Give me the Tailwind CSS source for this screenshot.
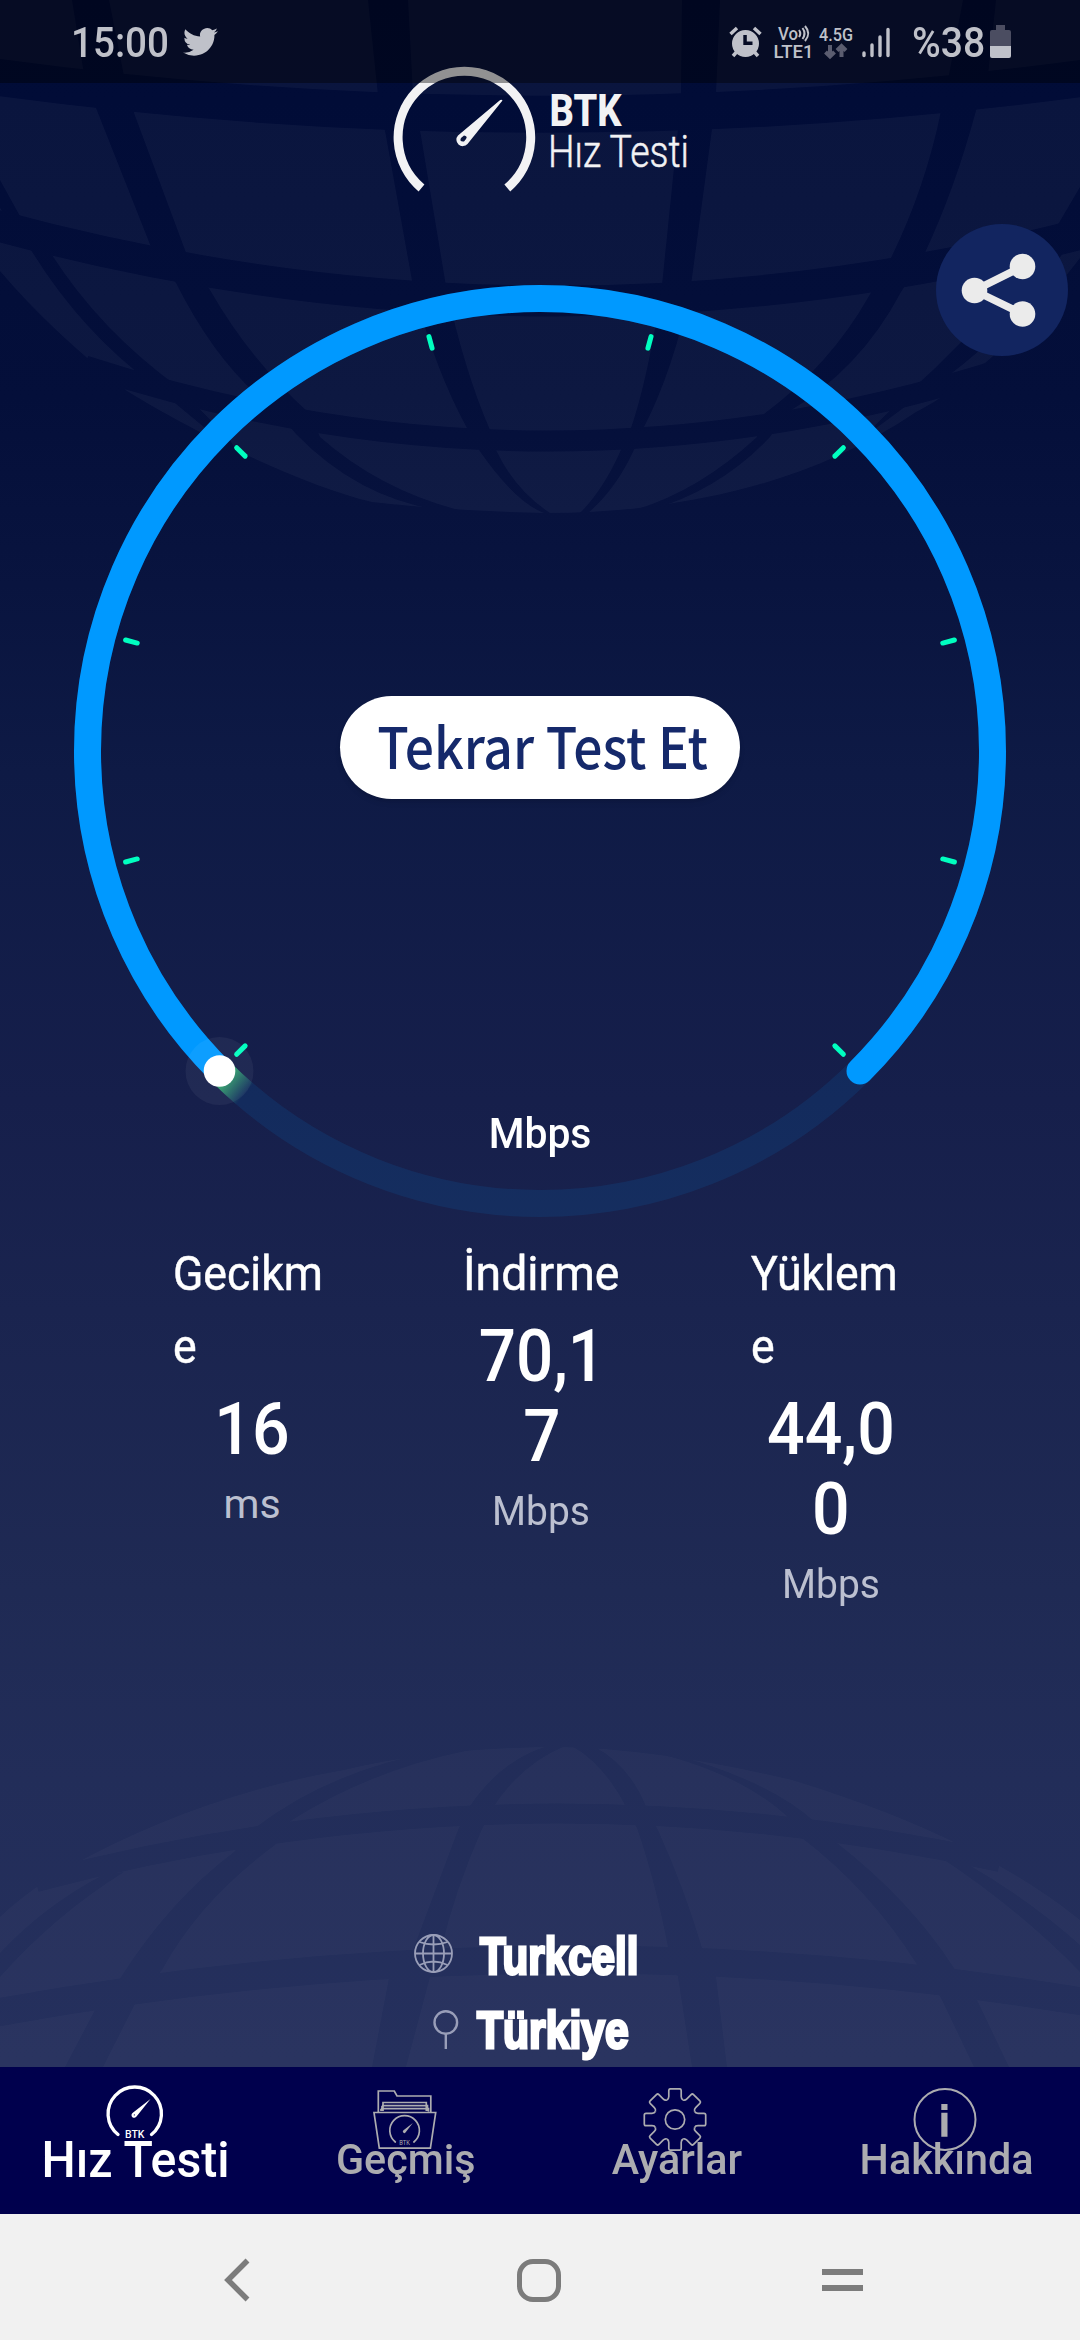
<!DOCTYPE html>
<html lang="tr">
<head>
  <meta charset="utf-8">
  <meta name="viewport" content="width=device-width, initial-scale=1">
  <title>BTK Hız Testi</title>
  <script src="https://cdn.jsdelivr.net/npm/@tailwindcss/browser@4"></script>
</head>
<body class="bg-[#000a35]">
<div class="relative flex h-[2340px] w-[1080px] flex-col overflow-hidden bg-[linear-gradient(180deg,#000b36_0%,#040f3a_17%,#09143f_25%,#0e1a45_33%,#161f4b_47%,#1a244f_56%,#1f2a54_68%,#222d59_76%,#25305d_88%)] font-['Roboto',sans-serif] text-white">

  <!-- globe backdrop -->
  <svg class="absolute inset-0" width="1080" height="2340" viewBox="0 0 1080 2340">
    <mask id="globes" maskUnits="userSpaceOnUse" x="0" y="0" width="1080" height="2340">
      <path fill="#fff" d="M0 0H1080V258C1040 310 1010 340 992 357C960 385 940 400 916 412C830 470 740 495 647 507Q600 513 545 513Q450 511 372 502C300 485 190 430 127 391Q50 330 0 271Z"/>
      <g fill="none" stroke="#000">
        <path stroke-width="37" d="M-5 77Q540 151 1085 78"/>
        <path stroke-width="31" d="M-5 225Q540 373 1085 233"/>
        <path stroke-width="21" d="M85 366Q545 515 1005 368"/>
      </g>
      <path d="M368 0L378 95L386 136L413 286Q435 370 468 430L479 450Q515 502 544 513H550Q515 490 496 450L490 430Q464 370 446 286L421 136L413 95L408 0Z"/>
      <path d="M682 0L681 93L678 129L662 285Q648 380 630 431L620 452Q603 490 580 513H588Q615 490 633 452L642 431Q674 370 691 285L712 129L716 93L720 0Z"/>
      <path d="M72 0L83 68L96 108L153 252L176 283Q220 370 275 409L296 434Q360 500 445 511H462Q380 490 320 437L310 414Q250 360 210 290L188 258L134 113L124 76L109 0Z"/>
      <path d="M963 0L948 80L941 111Q925 190 888 264L869 296Q830 365 764 414L757 437Q700 490 635 510H650Q720 490 770 437L785 414Q860 370 901 292L922 259Q955 190 977 107L988 75L996 0Z"/>
      <path d="M0 180L26 227L52 255Q100 330 178 387L230 440L240 457L152 384Q80 330 31 250L0 208Z"/>
      <path d="M1080 187L1053 233Q990 320 906 395L860 440L925 392Q1020 330 1080 225Z"/>

      <path fill="#fff" d="M0 1917C20 1898 45 1880 69 1867Q200 1795 344 1770Q441 1747 560 1747Q661 1749 792 1780Q890 1810 964 1847Q1030 1880 1080 1920V2070H0Z"/>
      <g fill="none" stroke="#000">
        <path stroke-width="20" d="M36 1882Q515 1756 1000 1862"/>
        <path stroke-width="28" d="M-5 2013Q545 1912 1085 2002"/>
      </g>
      <path d="M372 2067L389 1978L413 1950L458 1830L468 1809Q500 1760 548 1746H565Q520 1765 492 1809L482 1829Q455 1890 441 1950L430 1977L406 2067Z"/>
      <path d="M692 2067L678 1977L668 1947Q655 1880 637 1828L627 1809Q605 1765 572 1746H593Q630 1765 647 1809L658 1830Q685 1890 702 1948L716 1977L727 2067Z"/>
      <path d="M65 2067L96 2008L121 1977Q170 1900 234 1852L255 1828Q330 1770 441 1750L470 1750Q370 1770 289 1822L275 1845Q200 1900 162 1970L138 1998L103 2067Z"/>
      <path d="M974 2067L940 1996L916 1963Q870 1890 802 1838L792 1821Q740 1770 635 1748L665 1752Q770 1780 816 1823L837 1843Q910 1900 954 1968L978 2002L1009 2067Z"/>
      <path d="M0 1953Q45 1905 103 1875L124 1872Q55 1915 0 1977Z"/>
      <path d="M940 1857L964 1862Q1030 1900 1080 1945V1972Q1020 1910 940 1857Z"/>
    </mask>
    <rect width="1080" height="1000" fill="#fff" fill-opacity=".038" mask="url(#globes)"/>
    <rect y="1000" width="1080" height="1070" fill="#fff" fill-opacity=".025" mask="url(#globes)"/>
  </svg>

  <!-- logo -->
  <header class="relative h-[275px] pt-[60px] pl-[390px]">
    <svg class="overflow-visible" width="310" height="140" viewBox="0 0 310 140" fill="#f2f2f4">
      <path d="M31.500 128A66.300 66.300 0 1 1 117.300 128" fill="none" stroke="#f2f2f4" stroke-width="9"/>
      <path fill-rule="evenodd" d="M112.500 40.500Q111.500 39 109 41L68 75.500A6.300 6.300 0 1 0 77.500 84ZM71 78L74 75.500Q78 76 76 79L74 81.500Q69 82 71 78Z"/>
      <text x="159.500" y="65.800" font-size="45" font-weight="800" textLength="72" lengthAdjust="spacingAndGlyphs">BTK</text>
      <text x="158" y="106.700" font-size="45" font-weight="300" stroke="#f2f2f4" stroke-width=".5" textLength="141" lengthAdjust="spacingAndGlyphs">Hız Testi</text>
    </svg>
  </header>

  <button class="absolute top-[224px] left-[936px] flex size-[132px] items-center justify-center rounded-full bg-[#122560]" aria-label="Paylaş">
    <svg class="overflow-visible" width="74" height="74" viewBox="0 0 74 74" fill="#ebebeb">
      <path d="M57.500 13.500L9.500 37.500L57.500 61" fill="none" stroke="#ebebeb" stroke-width="7.500"/>
      <circle cx="57.500" cy="13.500" r="12.800"/>
      <circle cx="9.500" cy="37.500" r="12.800"/>
      <circle cx="57.500" cy="61" r="12.800"/>
    </svg>
  </button>

  <!-- gauge -->
  <section class="relative mx-auto grid size-[952px] shrink-0 place-items-center">
    <svg class="col-start-1 row-start-1" width="952" height="952" viewBox="0 0 952 952">
      <defs>
        <linearGradient id="tail" gradientUnits="userSpaceOnUse" x1="163" y1="804" x2="181" y2="819">
          <stop offset="0" stop-color="#2f9a6c"/>
          <stop offset="1" stop-color="#2f9a6c" stop-opacity="0"/>
        </linearGradient>
      </defs>
      <circle cx="476" cy="476" r="452.500" fill="none" stroke="#0099ff" stroke-opacity=".1" stroke-width="27"/>
      <path d="M156 796A452.500 452.500 0 0 0 181 819.200" fill="none" stroke="url(#tail)" stroke-width="27"/>
      <path d="M156 796A452.500 452.500 0 1 1 796 796" fill="none" stroke="#0099ff" stroke-width="27" stroke-linecap="round"/>
      <g stroke="#00ffc0" stroke-width="5" stroke-linecap="round">
        <path d="M893 476H905" transform="rotate(45 476 476)"/>
        <path d="M893 476H905" transform="rotate(135 476 476)"/>
        <path d="M893 476H905" transform="rotate(165 476 476)"/>
        <path d="M893 476H905" transform="rotate(195 476 476)"/>
        <path d="M893 476H905" transform="rotate(225 476 476)"/>
        <path d="M893 476H905" transform="rotate(255 476 476)"/>
        <path d="M893 476H905" transform="rotate(285 476 476)"/>
        <path d="M893 476H905" transform="rotate(315 476 476)"/>
        <path d="M893 476H905" transform="rotate(345 476 476)"/>
        <path d="M893 476H905" transform="rotate(15 476 476)"/>
      </g>
      <circle cx="155.500" cy="796" r="34" fill="#fff" fill-opacity=".05"/>
      <circle cx="155.500" cy="796" r="15.800" fill="#fff"/>
    </svg>
    <button class="relative col-start-1 row-start-1 mb-[7px] flex h-[103px] w-[400px] items-center justify-center rounded-full bg-white shadow-md">
      <span class="-mt-[6px] ml-[6px] origin-center scale-x-[.905] whitespace-nowrap font-['Noto_Sans_CJK_SC',sans-serif] text-[57px] leading-none font-medium text-[#15296b]">Tekrar Test Et</span>
    </button>
    <p class="relative col-start-1 row-start-1 self-end pb-[69px] text-[43px] leading-[50px] font-medium scale-x-[.95]">Mbps</p>
  </section>

  <!-- results -->
  <section class="relative mt-[10px] flex items-start gap-[131px] pl-[173px]">
    <div class="w-[158px] text-center">
      <h2 class="w-max origin-left scale-x-[.91] text-left text-[49px] leading-[73px] [-webkit-text-stroke:.5px_#fff]">Gecikm<br>e</h2>
      <p class="mt-[7px] scale-x-[.92] text-[72px] leading-[80px] font-medium">16</p>
      <p class="-mt-[2px] text-[41px] leading-[73px] text-[#bcc0d0]">ms</p>
    </div>
    <div class="w-[158px] text-center">
      <h2 class="ml-px w-max origin-left scale-x-[.945] text-left text-[49px] leading-[73px] [-webkit-text-stroke:.5px_#fff]">İndirme</h2>
      <p class="mt-[7px] scale-x-[.91] pl-[2px] text-[72px] leading-[80px] font-medium">70,1<br>7</p>
      <p class="-mt-[2px] scale-x-[.95] text-[41px] leading-[73px] text-[#bcc0d0]">Mbps</p>
    </div>
    <div class="w-[158px] text-center">
      <h2 class="w-max origin-left scale-x-[.91] text-left text-[49px] leading-[73px] [-webkit-text-stroke:.5px_#fff]">Yüklem<br>e</h2>
      <p class="mt-[7px] scale-x-[.92] pl-[2px] text-[72px] leading-[80px] font-medium">44,0<br>0</p>
      <p class="-mt-[2px] scale-x-[.95] pl-[2px] text-[41px] leading-[73px] text-[#bcc0d0]">Mbps</p>
    </div>
  </section>

  <!-- provider / location -->
  <section class="relative mt-auto -mb-px font-['Liberation_Sans',sans-serif] text-[52px] leading-[74px] font-bold">
    <div class="flex h-[74px] items-center gap-6 pl-[413px]">
      <svg class="-mt-2" width="41" height="41" viewBox="0 0 41 41" fill="none" stroke="#999eb8" stroke-width="1.800">
        <circle cx="20.500" cy="20.500" r="18.500"/>
        <ellipse cx="20.500" cy="20.500" rx="10.500" ry="18.500"/>
        <path d="M20.500 2V39M2 20.500H39M6.500 9Q20.500 14 34.500 9M6.500 32Q20.500 25 34.500 32"/>
      </svg>
      <span class="-mt-[2px] ml-[2px] origin-left scale-x-[.81] [-webkit-text-stroke:3px_#fff]">Turkcell</span>
    </div>
    <div class="flex h-[74px] items-center gap-4 pl-[433px]">
      <svg class="-mt-1" width="26" height="42" viewBox="0 0 26 42" fill="none" stroke="#999eb8" stroke-width="2.400">
        <circle cx="12.800" cy="14.500" r="11.300"/>
        <path d="M12.800 26V41"/>
      </svg>
      <span class="-mt-[2px] ml-[2px] origin-left scale-x-[.82] [-webkit-text-stroke:3px_#fff]">Türkiye</span>
    </div>
  </section>

  <!-- tabs -->
  <nav class="relative grid h-[147px] shrink-0 grid-cols-4 bg-[#00004d] text-center text-[43px] leading-[50px] font-medium whitespace-nowrap text-[#acacb0]">
    <a class="flex flex-col items-center pt-[17px] text-white">
      <svg width="64" height="56" viewBox="0 0 64 56" fill="#fff">
        <path d="M15 50.500A26.700 26.700 0 1 1 48.500 50.500" fill="none" stroke="#fff" stroke-width="3.300" stroke-linecap="round"/>
        <path fill-rule="evenodd" d="M47.500 15L29.500 29A2.700 2.700 0 1 0 33.500 32.500ZM30.500 31L32 30L31.500 31.800Z"/>
        <text x="22" y="54" font-size="11.500" textLength="19.500" lengthAdjust="spacingAndGlyphs">BTK</text>
      </svg>
      <span class="-mt-[5px] ml-[2px] scale-x-[.965] text-[50px]">Hız Testi</span>
    </a>
    <a class="flex flex-col items-center pt-[21px]">
      <svg width="64" height="63" viewBox="0 0 64 63" fill="none" stroke="#acacb0" stroke-width="1.700">
        <path d="M1 24.500H62.700L57.400 60.200H6.300ZM5.300 24V3H21.300L24 8H57.800V24M10 23V14.500H53.300V23M9 17.700H54.500V23M9 23V17.700M8 20.700H55.500V23.500M8 23V20.700"/>
        <path stroke-linecap="round" d="M22.300 54A14.800 14.800 0 1 1 40.900 54"/>
        <path fill="#acacb0" stroke="none" d="M39.800 35L30.500 42.300A1.500 1.500 0 1 0 32.500 44.500Z"/>
        <text x="26.300" y="57" fill="#acacb0" stroke="none" font-size="6.800" font-weight="400" textLength="10.700" lengthAdjust="spacingAndGlyphs">BTK</text>
      </svg>
      <span class="-mt-[17px] ml-[2px] scale-x-[.96]">Geçmiş</span>
    </a>
    <a class="flex flex-col items-center pt-[21px]">
      <svg width="64" height="63" viewBox="-32 -31.500 64 63" fill="none" stroke="#acacb0" stroke-width="1.700">
        <defs><path id="tooth" d="M-8.100 -19.600Q-6.200 -20.400 -6.200 -23V-29Q-6.200 -30.700 -4.500 -30.700H4.500Q6.200 -30.700 6.200 -29V-23Q6.200 -20.400 8.100 -19.600"/></defs>
        <circle r="9.700"/>
        <use href="#tooth"/>
        <use href="#tooth" transform="rotate(45)"/>
        <use href="#tooth" transform="rotate(90)"/>
        <use href="#tooth" transform="rotate(135)"/>
        <use href="#tooth" transform="rotate(180)"/>
        <use href="#tooth" transform="rotate(225)"/>
        <use href="#tooth" transform="rotate(270)"/>
        <use href="#tooth" transform="rotate(315)"/>
      </svg>
      <span class="-mt-[17px] ml-[3px] scale-x-[.96]">Ayarlar</span>
    </a>
    <a class="flex flex-col items-center pt-[21px]">
      <svg width="64" height="63" viewBox="0 0 64 63" fill="#acacb0">
        <circle cx="32" cy="31.500" r="30.500" fill="none" stroke="#acacb0" stroke-width="2"/>
        <path d="M28.300 16H34.500V22H28.300ZM28.300 24.700H34.500V48.700H28.300Z"/>
      </svg>
      <span class="-mt-[17px] ml-[3px] scale-x-[.96]">Hakkında</span>
    </a>
  </nav>

  <!-- system buttons -->
  <div class="relative flex h-[126px] shrink-0 items-center bg-[#f1f1f1] pl-[222px] text-[#7c7c7c]">
    <svg class="mt-[6px]" width="30" height="46" viewBox="0 0 30 46" fill="none" stroke="currentColor" stroke-width="5.500"><path d="M25.500 3.500L6 23L25.500 42.500"/></svg>
    <div class="mt-[6px] ml-[265px] h-[43px] w-[44px] rounded-[16px] border-[5.500px] border-[#7c7c7c]"></div>
    <div class="mt-[6px] ml-[261px] h-[22px] w-[41px] border-y-6 border-[#7c7c7c]"></div>
  </div>

  <!-- status bar -->
  <div class="absolute inset-x-0 top-0 flex h-[83px] items-center bg-black/40 pl-[71px] text-[42px] leading-none font-medium text-[#bfc1c9]">
    <span class="mt-[2px] w-[98px] origin-left scale-x-[.92]">15:00</span>
    <svg class="ml-[14px]" width="35" height="29" viewBox="0 1.500 24 20.500" preserveAspectRatio="none" fill="currentColor"><path d="M23.950 4.570a10 10 0 0 1-2.820.77 4.960 4.960 0 0 0 2.160-2.720c-.95.550-2 .960-3.130 1.180a4.920 4.920 0 0 0-8.380 4.480C7.690 8.090 4.070 6.130 1.640 3.160a4.820 4.820 0 0 0-.67 2.480c0 1.710.87 3.210 2.190 4.100a4.900 4.900 0 0 1-2.230-.62v.060a4.920 4.920 0 0 0 3.950 4.830 5 5 0 0 1-2.210.08 4.940 4.940 0 0 0 4.600 3.420A9.870 9.870 0 0 1 0 19.540a13.990 13.990 0 0 0 7.550 2.210c9.050 0 14-7.500 14-13.980 0-.21 0-.42-.020-.63a9.940 9.940 0 0 0 2.460-2.550z"/></svg>
    <svg class="ml-auto" width="33" height="32" viewBox="0 0 33 32" fill="currentColor">
      <path fill-rule="evenodd" d="M16.500 4a13.500 13.500 0 1 1 0 27a13.500 13.500 0 0 1 0-27ZM14.300 9V19H23.500V15.500H17.800V9Z"/>
      <path d="M1.500 8L8 2M31.500 8L25 2M4 30L8 25.500M29 30L25 25.500" fill="none" stroke="currentColor" stroke-width="3.500"/>
    </svg>
    <svg class="ml-3 overflow-visible" width="39" height="34" viewBox="0 0 39 34" fill="currentColor">
      <text x="4" y="14.500" font-size="18.500" textLength="20" lengthAdjust="spacingAndGlyphs">Vo</text>
      <path d="M25 5Q27.500 8.500 25 12M28.500 3Q32.500 8.500 28.500 14M31 1Q37.500 8.500 31 16" fill="none" stroke="currentColor" stroke-width="2"/>
      <text x="-.5" y="32.500" font-size="18.500" textLength="40" lengthAdjust="spacingAndGlyphs">LTE1</text>
    </svg>
    <svg class="ml-[6px] overflow-visible" width="34" height="34" viewBox="0 0 34 34" fill="currentColor">
      <text x="0" y="15.500" font-size="18.500" textLength="34" lengthAdjust="spacingAndGlyphs">4.5G</text>
      <path d="M11 20V31M6.500 27L11 31.500L15.500 27M22.500 32V21M18 25.500L22.500 21L27 25.500" fill="none" stroke="#5b5d70" stroke-width="4"/>
    </svg>
    <svg class="ml-[9px]" width="28" height="32" viewBox="0 0 28 32" fill="none" stroke="currentColor" stroke-width="3.400" stroke-linecap="round"><path d="M2 27V29.500M10 19V29.500M18 11V29.500M26 3.500V29.500"/></svg>
    <span class="mt-[2px] ml-[22px] w-[76px] origin-left scale-x-[.93]">%38</span>
    <svg class="mr-[69px] ml-[2px]" width="21" height="33" viewBox="0 0 21 33">
      <path fill="#4b4d61" d="M6 0H15V5H19Q21 5 21 7V21H0V7Q0 5 2 5H6Z"/>
      <path fill="#bfc1c9" d="M0 21H21V31Q21 33 19 33H2Q0 33 0 31Z"/>
    </svg>
  </div>
</div>
</body>
</html>
